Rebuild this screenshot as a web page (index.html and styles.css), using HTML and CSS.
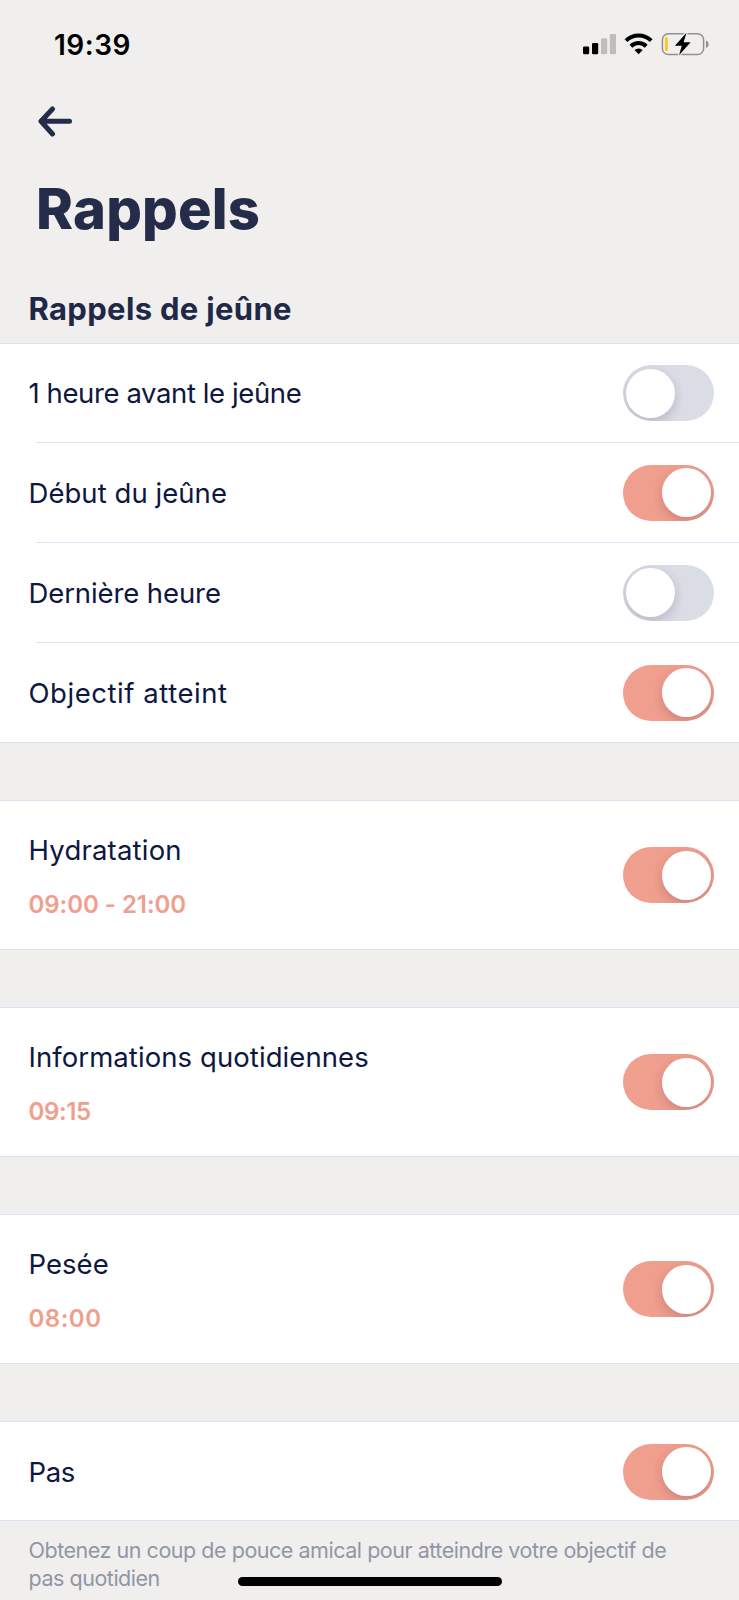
FILE: index.html
```
<!DOCTYPE html>
<html lang="fr">
<head>
<meta charset="utf-8">
<title>Rappels</title>
<link rel="stylesheet" href="styles.css">
</head>
<body>
<div class="screen">
  <header class="status">
    <span class="clock">19:39</span>
    <svg class="status-icons" width="128" height="24" viewBox="582 32 128 24">
      <rect x="583" y="46.5" width="6.2" height="7.7" rx="1.3" fill="#000"/>
      <rect x="592" y="43" width="6.2" height="11.2" rx="1.3" fill="#000"/>
      <rect x="601" y="38.3" width="6.2" height="15.9" rx="1.3" fill="#bfbebd"/>
      <rect x="609.8" y="34" width="6.2" height="20.2" rx="1.3" fill="#bfbebd"/>
      <g fill="none" stroke="#000" stroke-width="4">
        <path d="M626 40.6a18 18 0 0 1 25.2 0"/>
        <path d="M631 46.2a10.9 10.9 0 0 1 15.200 0"/>
      </g>
      <path d="M638.600 54.200l-4.100-4.200a6 6 0 0 1 8.200 0z" fill="#000"/>
      <rect x="662.400" y="33.700" width="41.200" height="20.800" rx="6" fill="none" stroke="#92918f" stroke-width="1.500"/>
      <path d="M706 40.500c3.500 1 3.500 6.500 0 7.500z" fill="#92918f"/>
      <rect x="665" y="37.300" width="2.700" height="13.600" rx="1" fill="#ffc60a"/>
      <path d="M686.500 32.800L674.900 45.700h6.800l-2.600 9.500L690.600 42.200h-7z" fill="#000" stroke="#f0efed" stroke-width="2.500" paint-order="stroke"/>
    </svg>
  </header>
  <svg class="back" width="36" height="32" viewBox="0 0 36 32" fill="none" stroke="#242c4a" stroke-width="5" stroke-linecap="round" stroke-linejoin="round">
    <path d="M15.500 3L4 15.300 15.500 28M4.500 15.300H32.500"/>
  </svg>
  <h1 class="title">Rappels</h1>
  <h2 class="subtitle">Rappels de jeûne</h2>

  <main class="groups">
    <section class="group">
      <div class="row"><span class="label l-before">1 heure avant le jeûne</span><i class="toggle"></i></div>
      <div class="row"><span class="label l-start">Début du jeûne</span><i class="toggle on"></i></div>
      <div class="row"><span class="label l-last">Dernière heure</span><i class="toggle"></i></div>
      <div class="row"><span class="label l-goal">Objectif atteint</span><i class="toggle on"></i></div>
    </section>
    <section class="group">
      <div class="row tall"><div class="texts"><span class="label l-water">Hydratation</span><span class="time t-range">09:00 - 21:00</span></div><i class="toggle on"></i></div>
    </section>
    <section class="group">
      <div class="row tall"><div class="texts"><span class="label l-info">Informations quotidiennes</span><span class="time t-info">09:15</span></div><i class="toggle on"></i></div>
    </section>
    <section class="group">
      <div class="row tall"><div class="texts"><span class="label l-weigh">Pesée</span><span class="time t-weigh">08:00</span></div><i class="toggle on"></i></div>
    </section>
    <section class="group">
      <div class="row last"><span class="label l-steps">Pas</span><i class="toggle on"></i></div>
    </section>
  </main>
  <p class="note">Obtenez un coup de pouce amical pour atteindre votre objectif de<br>pas quotidien</p>
  <div class="home-bar"></div>
</div>
</body>
</html>
```
FILE: styles.css
```
* { box-sizing: border-box; }
body {
  margin: 0;
  background: #f0efed;
  font-family: Inter, "Liberation Sans", sans-serif;
}
.screen {
  position: relative;
  display: flex;
  flex-direction: column;
  width: 739px;
  height: 1600px;
  overflow: hidden;
}
.status {
  display: flex;
  justify-content: space-between;
  align-items: center;
  height: 88px;
  padding: 0 29px 0 54px;
}
.clock {
  padding-top: 2px;
  font-size: 28px;
  line-height: 34px;
  font-weight: 600;
  letter-spacing: 0.500px;
  color: #000;
}
.status-icons { display: block; }
.back {
  display: block;
  flex: none;
  margin: 18px 0 0 37px;
}
.title {
  margin: 37px 0 0 36px;
  font-size: 56px;
  line-height: 68px;
  font-weight: 800;
  letter-spacing: 0.200px;
  color: #242c4a;
}
.subtitle {
  margin: 46px 0 0 28.500px;
  font-size: 31px;
  line-height: 40px;
  height: 54px;
  font-weight: 700;
  letter-spacing: 0.330px;
  color: #1f2847;
  white-space: nowrap;
}
.groups {
  display: flex;
  flex-direction: column;
  gap: 57px;
}
.group {
  border-top: 1px solid #dbe1f2;
  border-bottom: 1px solid #dbe1f2;
  background: #fff;
}
.row {
  display: flex;
  justify-content: space-between;
  align-items: center;
  height: 98px;
  padding: 0 25px 0 28.500px;
}
.row + .row {
  height: 100px;
  padding-top: 1px;
  background: linear-gradient(#dbe1f2, #dbe1f2) 36px 0 / 100% 1px no-repeat;
}
.row.last { padding-top: 1px; }
.row.tall { height: 148px; }
.texts {
  display: flex;
  flex-direction: column;
  gap: 19px;
  padding-top: 4px;
}
.label {
  font-size: 27.500px;
  line-height: 36px;
  color: #0e1740;
  white-space: nowrap;
}
.l-before { letter-spacing: -0.400px; }
.l-start { letter-spacing: 0.050px; }
.l-last { letter-spacing: -0.100px; }
.l-goal { letter-spacing: 0.550px; }
.l-water { letter-spacing: 0.200px; }
.l-info { letter-spacing: 0.080px; }
.l-weigh { letter-spacing: 0.050px; }
.l-steps { letter-spacing: -0.400px; }
.time {
  font-size: 24px;
  line-height: 36px;
  font-weight: 600;
  color: #f09e8e;
  white-space: nowrap;
}
.t-range { letter-spacing: -0.040px; }
.t-info { letter-spacing: -0.400px; }
.t-weigh { letter-spacing: 0.500px; }
.toggle {
  display: flex;
  align-items: center;
  width: 91px;
  height: 56px;
  padding: 0 3px;
  border-radius: 28px;
  background: #dadce6;
  overflow: hidden;
}
.toggle::before {
  content: "";
  width: 49px;
  height: 49px;
  border-radius: 50%;
  background: #fff;
  box-shadow: 0 4px 11px rgba(50, 30, 50, 0.200);
}
.toggle.on {
  justify-content: flex-end;
  background: #f09e8e;
}
.note {
  margin: 15px 0 0 28.500px;
  font-size: 21.500px;
  line-height: 28px;
  letter-spacing: -0.470px;
  color: #9096a5;
  white-space: nowrap;
}
.home-bar {
  position: absolute;
  left: 237.500px;
  top: 1577px;
  width: 264px;
  height: 8.500px;
  border-radius: 5px;
  background: #000;
}
```
